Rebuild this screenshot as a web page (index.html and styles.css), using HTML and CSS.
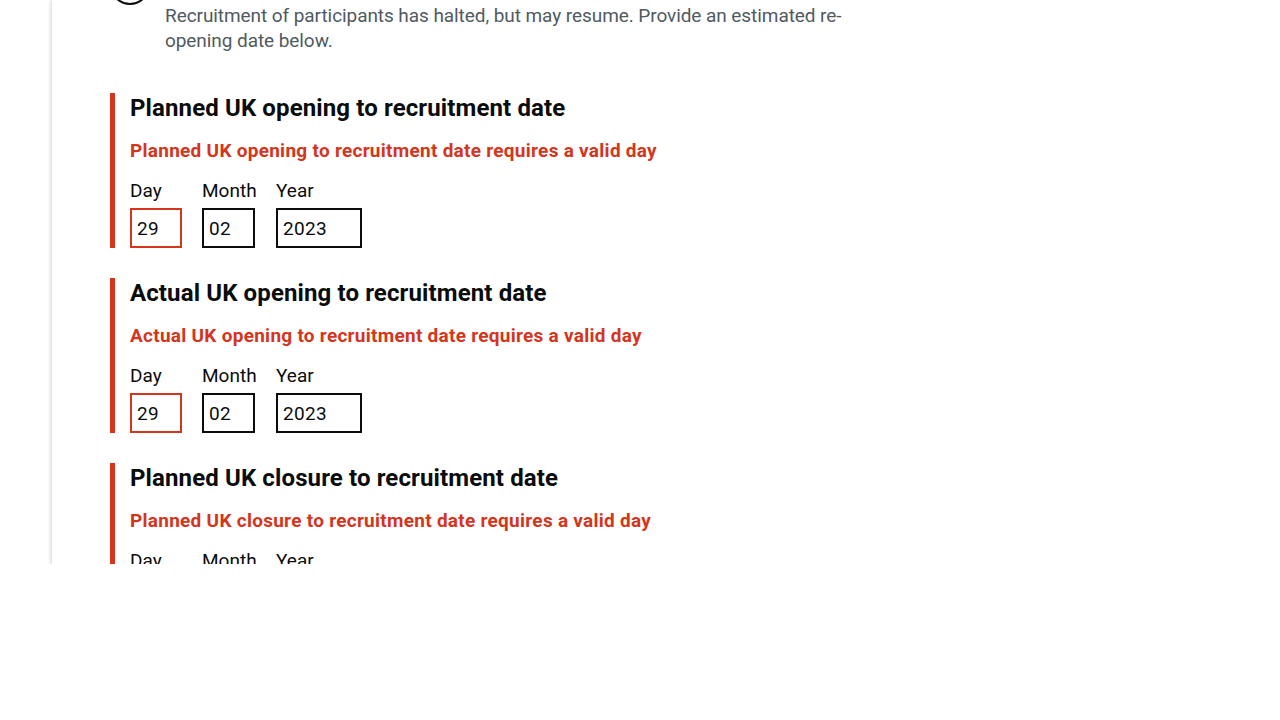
FILE: index.html
```html
<!DOCTYPE html>
<html>
<head>
	<title>Recruitment dates</title>
	<meta charset="utf8"/>
	<link rel="stylesheet" href="styles.css">
</head>
<body>
	<div class="viewport">
		<main class="page">
			<div class="status">
				<span class="radio"></span>
				<p class="hint">Recruitment of participants has halted, but may resume. Provide an estimated re-opening date below.</p>
			</div>

			<section class="group">
				<h2>Planned UK opening to recruitment date</h2>
				<p class="error">Planned UK opening to recruitment date requires a valid day</p>
				<div class="date">
					<div class="item"><label for="d1">Day</label><input class="day invalid" id="d1" type="text" value="29"/></div>
					<div class="item item-month"><label for="m1">Month</label><input class="month" id="m1" type="text" value="02"/></div>
					<div class="item"><label for="y1">Year</label><input class="year" id="y1" type="text" value="2023"/></div>
				</div>
			</section>

			<section class="group">
				<h2>Actual UK opening to recruitment date</h2>
				<p class="error">Actual UK opening to recruitment date requires a valid day</p>
				<div class="date">
					<div class="item"><label for="d2">Day</label><input class="day invalid" id="d2" type="text" value="29"/></div>
					<div class="item item-month"><label for="m2">Month</label><input class="month" id="m2" type="text" value="02"/></div>
					<div class="item"><label for="y2">Year</label><input class="year" id="y2" type="text" value="2023"/></div>
				</div>
			</section>

			<section class="group">
				<h2>Planned UK closure to recruitment date</h2>
				<p class="error">Planned UK closure to recruitment date requires a valid day</p>
				<div class="date">
					<div class="item"><label for="d3">Day</label><input class="day" id="d3" type="text" value=""/></div>
					<div class="item item-month"><label for="m3">Month</label><input class="month" id="m3" type="text" value=""/></div>
					<div class="item"><label for="y3">Year</label><input class="year" id="y3" type="text" value=""/></div>
				</div>
			</section>
		</main>
	</div>
</body>
</html>
```
FILE: styles.css
```css
* {
	box-sizing: border-box;
}

body {
	background: #fff;
	color: #0b0c0c;
	font-family: Roboto, sans-serif;
	margin: 0;
}

.viewport {
	height: 564px;
	overflow: hidden;
}

.page {
	box-shadow: -2px 0 3px rgba(0, 0, 0, 0.12);
	margin-left: 52px;
	min-height: 564px;
	padding: 0 0 0 58px;
}

.status {
	display: flex;
	height: 93px;
}

.radio {
	border: 2px solid #0b0c0c;
	border-radius: 50%;
	flex: none;
	height: 40px;
	margin: -35px 0 0 0;
	width: 40px;
}

.hint {
	color: #505a5f;
	font-size: 19px;
	letter-spacing: -0.07px;
	line-height: 25px;
	margin: 3px 0 0 15px;
	width: 700px;
}

.group {
	border-left: 5px solid #d4351c;
	margin-bottom: 30px;
	padding-left: 15px;
	width: 760px;
}

h2 {
	font-size: 24px;
	font-weight: 700;
	letter-spacing: 0.12px;
	line-height: 30px;
	margin: 0 0 15px;
}

.error {
	color: #d4351c;
	font-size: 19px;
	font-weight: 700;
	letter-spacing: 0.27px;
	line-height: 25px;
	margin: 0 0 15px;
}

.date {
	display: flex;
	gap: 20px;
}

.item-month {
	width: 54px;
}

label {
	display: block;
	font-size: 19px;
	line-height: 25px;
	margin-bottom: 5px;
}

input {
	border: 2px solid #0b0c0c;
	border-radius: 0;
	color: #0b0c0c;
	display: block;
	font-family: inherit;
	font-size: 19px;
	height: 40px;
	letter-spacing: 0.3px;
	margin: 0;
	padding: 5px;
}

.day {
	width: 52px;
}

.month {
	width: 53px;
}

.year {
	width: 86px;
}

.invalid {
	border-color: #d4351c;
}
```
